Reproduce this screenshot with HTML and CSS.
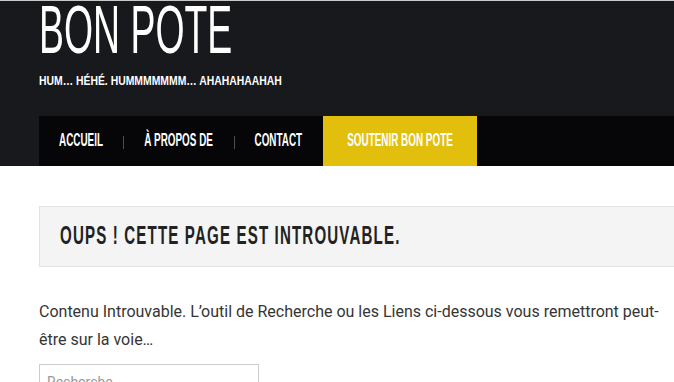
FILE: index.html
```html
<!DOCTYPE html>
<html lang="fr">
<head>
  <meta charset="UTF-8"/>
  <meta name="viewport" content="width=device-width, initial-scale=1.0"/>
  <title>Page introuvable - Bon Pote</title>
  <link rel="stylesheet" href="styles.css">
</head>
<body>

<header class="site-header">
  <div class="site-title"><span>BON POTE</span></div>
  <div class="site-tagline"><span>HUM… HÉHÉ. HUMMMMMMM… AHAHAHAAHAH</span></div>

  <nav class="main-nav">
    <a href="#" class="nav-item item-home"><span>ACCUEIL</span></a>
    <a href="#" class="nav-item item-about"><span>À PROPOS DE</span></a>
    <a href="#" class="nav-item item-contact"><span>CONTACT</span></a>
    <a href="#" class="nav-item item-support"><span>SOUTENIR BON POTE</span></a>
  </nav>
</header>

<main class="content">
  <div class="page-title">
    <h1><span>OUPS ! CETTE PAGE EST INTROUVABLE.</span></h1>
  </div>

  <p class="not-found">Contenu Introuvable. L’outil de Recherche ou les Liens ci-dessous vous remettront peut-être sur la voie…</p>

  <form class="search-form">
    <input type="search" class="search-field" placeholder="Recherche">
  </form>
</main>

</body>
</html>
```

FILE: styles.css
```css
body {
  margin: 0;
  font-family: Roboto, sans-serif;
  background-color: white;
  overflow: hidden;
}

.site-header {
  background-color: #18191d;
  border-top: 1px solid #c9c9c9;
  padding-left: 39px;
  color: white;
}

.site-title,
.site-tagline,
.page-title h1,
.nav-item {
  font-family: "Liberation Sans", sans-serif;
}

.site-title {
  font-size: 68px;
  line-height: 56px;
  height: 56px;
  white-space: nowrap;
}

.site-title span {
  display: inline-block;
  transform: scaleX(0.55);
  transform-origin: left center;
}

.site-tagline {
  margin-top: 14px;
  font-size: 13px;
  line-height: 20px;
  font-weight: bold;
  white-space: nowrap;
}

.site-tagline span {
  display: inline-block;
  transform: scaleX(0.8);
  transform-origin: left center;
}

.main-nav {
  margin-top: 25px;
  display: flex;
  height: 50px;
  background-color: #060608;
}

.nav-item {
  position: relative;
  display: flex;
  justify-content: center;
  color: white;
  text-decoration: none;
  font-size: 18px;
  font-weight: bold;
  line-height: 49px;
  white-space: nowrap;
}

.nav-item span {
  display: block;
  transform: scaleX(0.55);
}

.item-home { width: 84px; }
.item-about { width: 111px; }
.item-contact { width: 89px; }
.item-support { width: 154px; background-color: #e3bf0d; }

.item-about::before,
.item-contact::before {
  content: "";
  position: absolute;
  left: 0;
  top: 20px;
  width: 1px;
  height: 13px;
  background-color: #4d4d4d;
}

.content {
  padding: 40px 0 0 39px;
  width: 640px;
}

.page-title {
  background-color: #f4f4f4;
  border: 1px solid #e3e3e3;
  padding-left: 20px;
  height: 59px;
}

.page-title h1 {
  margin: 0;
  font-size: 26px;
  line-height: 57px;
  font-weight: bold;
  color: #222;
  white-space: nowrap;
}

.page-title h1 span {
  display: inline-block;
  letter-spacing: 2px;
  transform: scaleX(0.58);
  transform-origin: left center;
}

.not-found {
  margin: 31px 0 0;
  font-size: 16px;
  line-height: 28px;
  color: #353535;
}

.search-form {
  margin-top: 10px;
}

.search-field {
  box-sizing: border-box;
  width: 220px;
  height: 36px;
  padding: 0 7px;
  border: 1px solid #ccc;
  font-family: Roboto, sans-serif;
  font-size: 14px;
  color: #333;
}

.search-field::placeholder {
  color: #999;
}
```
